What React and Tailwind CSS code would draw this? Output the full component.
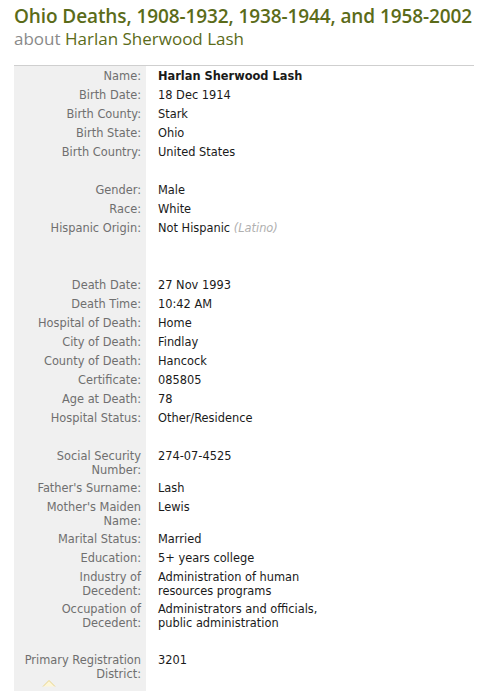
const rows = [
  { label: 'Name:', value: 'Harlan Sherwood Lash', bold: true },
  { label: 'Birth Date:', value: '18 Dec 1914' },
  { label: 'Birth County:', value: 'Stark' },
  { label: 'Birth State:', value: 'Ohio' },
  { label: 'Birth Country:', value: 'United States' },
  { spacer: true },
  { label: 'Gender:', value: 'Male' },
  { label: 'Race:', value: 'White' },
  { label: 'Hispanic Origin:', value: 'Not Hispanic', note: '(Latino)' },
  { spacer: true },
  { spacer: true },
  { label: 'Death Date:', value: '27 Nov 1993' },
  { label: 'Death Time:', value: '10:42 AM' },
  { label: 'Hospital of Death:', value: 'Home' },
  { label: 'City of Death:', value: 'Findlay' },
  { label: 'County of Death:', value: 'Hancock' },
  { label: 'Certificate:', value: '085805' },
  { label: 'Age at Death:', value: '78' },
  { label: 'Hospital Status:', value: 'Other/Residence' },
  { spacer: true },
  { label: ['Social Security', 'Number:'], value: '274-07-4525' },
  { label: "Father's Surname:", value: 'Lash' },
  { label: ["Mother's Maiden", 'Name:'], value: 'Lewis' },
  { label: 'Marital Status:', value: 'Married' },
  { label: 'Education:', value: '5+ years college' },
  { label: ['Industry of', 'Decedent:'], value: ['Administration of human', 'resources programs'] },
  { label: ['Occupation of', 'Decedent:'], value: ['Administrators and officials,', 'public administration'] },
  { spacer: true },
  { label: ['Primary Registration', 'District:'], value: '3201' },
];

function Lines({ text }) {
  if (Array.isArray(text)) {
    return text.map((t, i) => <div key={i}>{t}</div>);
  }
  return text;
}

export default function App() {
  return (
    <div className="bg-white px-[14px] pt-[4px] overflow-hidden h-[691px]">
      <div className="font-['Open_Sans',sans-serif] text-[#5b6b19] leading-[24px] whitespace-nowrap">
        <h1 className="text-[19px] font-semibold tracking-[-0.1px]">
          Ohio Deaths, 1908-1932, 1938-1944, and 1958-2002
        </h1>
        <div className="text-[17px] mt-[-1px]">
          <span className="text-[#8a8a8a]">about</span> Harlan Sherwood Lash
        </div>
      </div>

      <table className="mt-[14px] w-[460px] border-t border-[#cfcfcf] border-collapse font-['DejaVu_Sans',sans-serif] text-[11.4px] leading-[14px]">
        <tbody>
          {rows.map((r, i) => {
            if (r.spacer) {
              return (
                <tr key={i} className="h-[19px]">
                  <td className="w-[132px] bg-[#f0f0f0]"></td>
                  <td></td>
                </tr>
              );
            }
            const multi = Array.isArray(r.label);
            return (
              <tr key={i}>
                <td className={`w-[132px] bg-[#f0f0f0] text-right text-[#6f6f6f] align-top pr-[5px] pt-[3px] ${multi ? 'pb-[1px]' : 'pb-[2px]'}`}>
                  <Lines text={r.label} />
                </td>
                <td className={`align-top pl-[12px] pt-[3px] text-[#1a1a1a] ${multi ? 'pb-[1px]' : 'pb-[2px]'} ${r.bold ? 'font-bold' : ''}`}>
                  <Lines text={r.value} />
                  {r.note && <span className="italic text-[#b0b0b0]"> {r.note}</span>}
                </td>
              </tr>
            );
          })}
          <tr className="h-[19px]">
            <td className="w-[132px] bg-[#f0f0f0] pl-[28px] align-top">
              <svg width="14" height="8" viewBox="0 0 14 8" className="mt-[-3px]">
                <path d="M1 7.5 L7 1.5 L13 7.5" fill="#fdf6d8" stroke="#e8d48a" strokeWidth="1" />
              </svg>
            </td>
            <td></td>
          </tr>
        </tbody>
      </table>
    </div>
  );
}
